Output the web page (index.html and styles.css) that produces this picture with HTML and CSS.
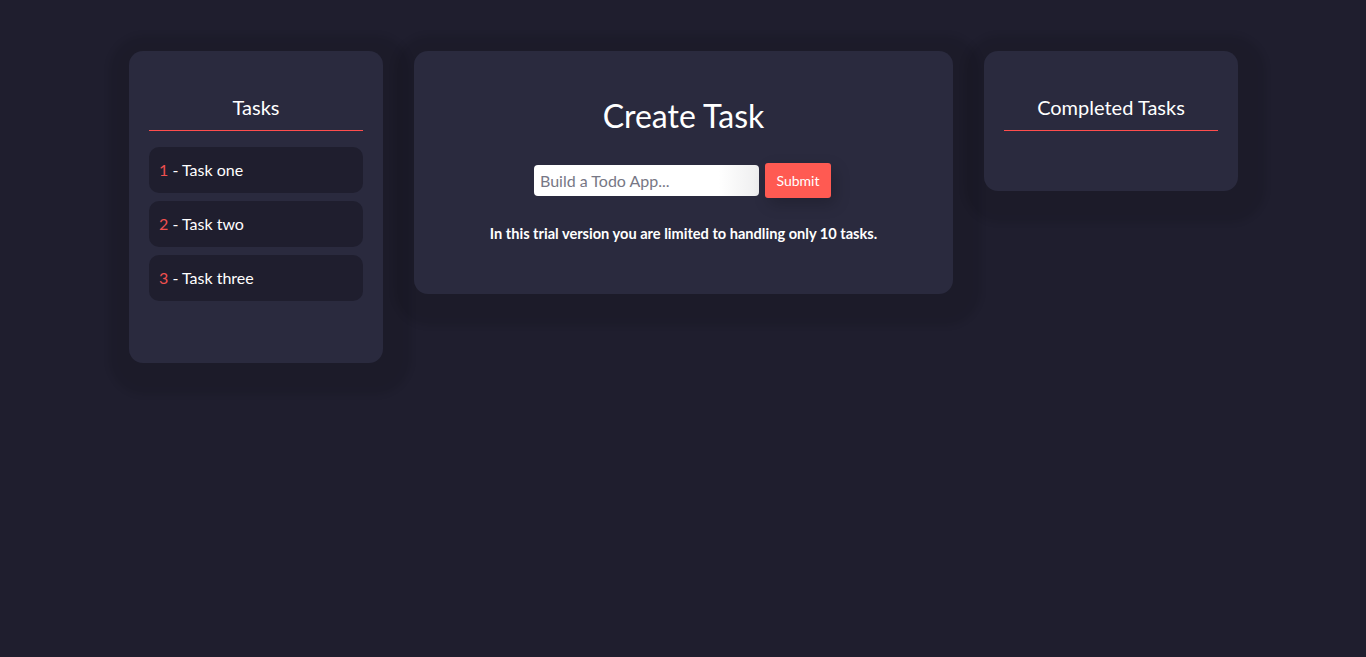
FILE: index.html
```html
<!DOCTYPE html>
<html lang="en">
<head>
<meta charset="utf-8">
<title>Todo App</title>
<link rel="stylesheet" href="styles.css">
</head>
<body>
<main class="board">
  <section class="card card--side">
    <h2 class="card-title">Tasks</h2>
    <ul class="task-list">
      <li class="task"><span class="task-num">1</span> - Task one</li>
      <li class="task"><span class="task-num">2</span> - Task two</li>
      <li class="task"><span class="task-num">3</span> - Task three</li>
    </ul>
  </section>
  <section class="card card--main">
    <h1 class="main-title">Create Task</h1>
    <form class="task-form">
      <input class="task-input" type="text" placeholder="Build a Todo App...">
      <button class="submit-btn" type="button">Submit</button>
    </form>
    <p class="notice">In this trial version you are limited to handling only 10 tasks.</p>
  </section>
  <section class="card card--side">
    <h2 class="card-title">Completed Tasks</h2>
    <ul class="task-list task-list--empty"></ul>
  </section>
</main>
</body>
</html>
```

FILE: styles.css
```css
* { box-sizing: border-box; }

html, body {
  margin: 0;
  padding: 0;
  background: #1f1e2e;
  color: #ffffff;
  font-family: Lato, "Open Sans", sans-serif;
  height: 100%;
}

.board {
  display: flex;
  justify-content: center;
  align-items: flex-start;
  gap: 31px;
  padding-top: 51px;
  padding-left: 1px;
}

.card {
  background: #2a2a3e;
  border-radius: 14px;
  box-shadow: 4px 8px 6px 24px rgba(0, 0, 0, 0.09);
}

.card--side {
  width: 254px;
  padding: 20px;
}

.card-title {
  margin: 24px 0 0;
  padding-bottom: 11px;
  border-bottom: 1px solid #ff4d4d;
  font-size: 20px;
  line-height: 24px;
  font-weight: 400;
  text-align: center;
}

.task-list {
  list-style: none;
  margin: 16px 0 42px;
  padding: 0;
  display: flex;
  flex-direction: column;
  gap: 8px;
}

.task-list--empty {
  margin: 0 0 40px;
}

.task {
  background: #1f1e2e;
  border-radius: 10px;
  height: 46px;
  padding: 0 0 2px 10px;
  display: flex;
  align-items: center;
  white-space: pre;
  font-size: 16px;
}

.task-num {
  color: #f0504f;
}

.card--main {
  width: 539px;
  padding: 46px 20px 50px;
  text-align: center;
}

.main-title {
  margin: 0;
  font-size: 32px;
  line-height: 38px;
  font-weight: 400;
}

.task-form {
  margin-top: 28px;
  display: flex;
  justify-content: center;
  align-items: center;
  gap: 6px;
  padding-right: 2px;
}

.task-input {
  width: 225px;
  height: 31px;
  border: none;
  border-radius: 4px;
  padding: 0 6px;
  background: linear-gradient(90deg, #ffffff 82%, #eeeeef 100%);
  font-family: Lato, "Open Sans", sans-serif;
  font-size: 16px;
  color: #333;
  outline: none;
}

.task-input::placeholder {
  color: #777785;
}

.submit-btn {
  width: 66px;
  height: 35px;
  border: none;
  border-radius: 3px;
  background: #ff5a52;
  color: #fff;
  font-family: Lato, "Open Sans", sans-serif;
  font-size: 14px;
  padding-bottom: 2px;
  box-shadow: 4px 6px 16px rgba(0, 0, 0, 0.2);
}

.notice {
  margin: 26px 0 0;
  font-size: 14.6px;
  line-height: 20px;
  font-weight: 700;
}
```
